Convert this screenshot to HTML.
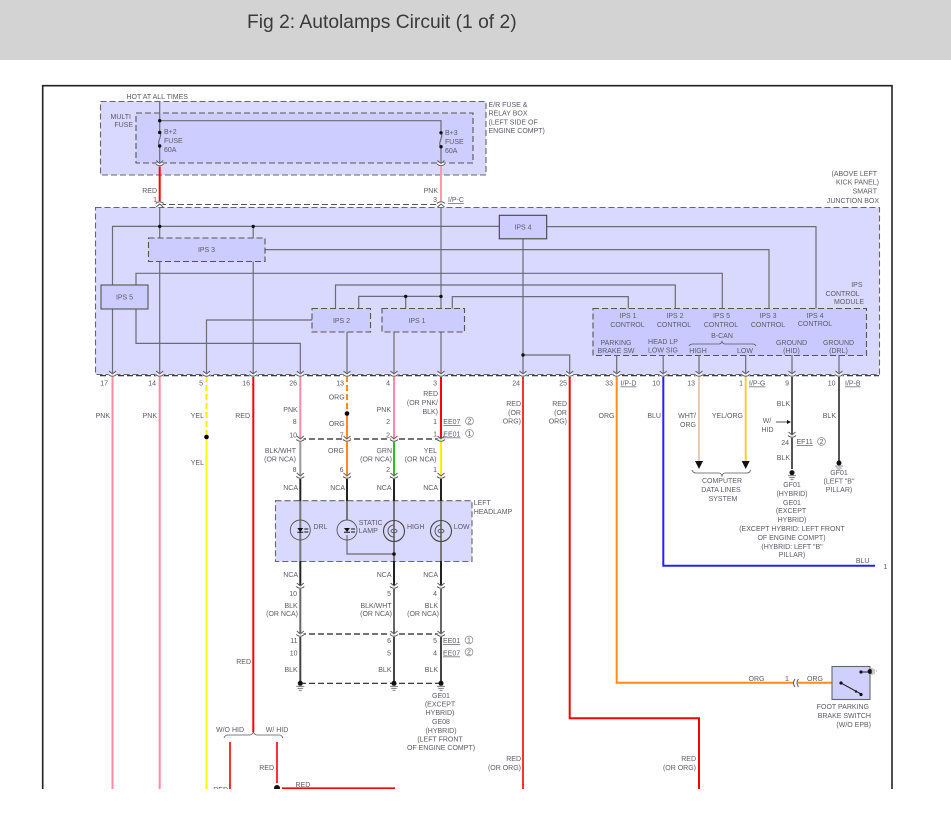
<!DOCTYPE html>
<html lang="en"><head><meta charset="utf-8"><title>Fig 2: Autolamps Circuit (1 of 2)</title>
<style>
html,body{margin:0;padding:0;background:#fff;width:951px;height:813px;overflow:hidden}
svg{display:block;position:absolute;left:0;top:0}
text{font-family:"Liberation Sans",sans-serif;font-size:7px;fill:#5a5a66}
.e{text-anchor:end}.m{text-anchor:middle}
.u{text-decoration:underline}
.w{fill:none;stroke:#6c6c74;stroke-width:1.2}
.c{fill:none;stroke-width:2}
.d{fill:none;stroke:#555;stroke-width:1.1;stroke-dasharray:6 3}
.k{fill:none;stroke:#222;stroke-width:1.2;stroke-dasharray:6 3}
</style></head><body>
<svg width="951" height="789" viewBox="0 0 951 789" xmlns="http://www.w3.org/2000/svg">
<defs>
<g id="cn"><ellipse cx="0" cy="1" rx="4.5" ry="2" fill="#fff"/><path d="M-3.5,-3 L0,0 L3.5,-3 M-4,0.5 Q0,4 4,0.5" fill="none" stroke="#555" stroke-width=".9"/></g>
<g id="cu"><ellipse cx="0" cy="-1" rx="4.5" ry="2" fill="#fff"/><path d="M-3.5,3 L0,0 L3.5,3 M-4,-.5 Q0,-4 4,-.5" fill="none" stroke="#555" stroke-width=".9"/></g>
<g id="gd"><circle r="2.5" fill="#111"/><path d="M-4,3 H4 M-2.8,5 H2.8 M-1.4,7 H1.4" stroke="#666" stroke-width=".8"/></g>
<g id="led"><circle r="10" fill="none" stroke="#555" stroke-width=".9"/><path d="M-3,-2 H3 L0,2 Z" fill="#111"/><path d="M-3,2.2 H3 M4,-1 H8 M4,2 H8" stroke="#111" stroke-width="1"/></g>
<g id="lmp"><circle r="10.5" fill="none" stroke="#444" stroke-width="1.1"/><path d="M0,-6 A6,6 0 0 0 0,6" fill="none" stroke="#555" stroke-width="1"/><ellipse rx="3" ry="1.8" fill="none" stroke="#555" stroke-width=".9"/></g>
</defs>

<rect width="951" height="60" fill="#d3d3d3"/>
<text x="247" y="28" style="font-size:19.25px;fill:#3a3a3a">Fig 2: Autolamps Circuit (1 of 2)</text>

<path d="M42.7,789 V85.7 H892 V789" fill="none" stroke="#222" stroke-width="1.6"/>

<!-- boxes -->
<rect x="100.5" y="101.5" width="385.5" height="73.5" fill="#d9d9ff" stroke="#666" stroke-width="1.1" stroke-dasharray="6 3"/>
<rect x="136" y="113" width="337" height="50" fill="#cdcdff" stroke="#555" stroke-width="1.1" stroke-dasharray="6 3"/>
<rect x="95.5" y="207.5" width="784" height="167" fill="#d9d9ff" stroke="#666" stroke-width="1.1" stroke-dasharray="6 3"/>
<rect x="593" y="308.5" width="273.5" height="47" fill="#c9c9ff" stroke="#555" stroke-width="1.1" stroke-dasharray="6 3"/>
<rect x="275.5" y="500.7" width="196.5" height="60.8" fill="#d9d9ff" stroke="#666" stroke-width="1.1" stroke-dasharray="6 3"/>

<!-- top wires -->
<path class="w" d="M159.7,101 V132 M159.7,146 V163 M159.7,120.7 H441 V133 M441,147 V163"/>
<path class="w" d="M159.7,132 C163,136 156,142 159.7,146 M441,133 C444,137 437,143 441,147"/>
<path class="c" stroke="#f00" d="M159.7,166 V204"/>
<path class="c" stroke="#ff99aa" d="M441,166 V204"/>
<path class="d" d="M160,204.5 H441"/>
<g fill="#111"><circle cx="159.7" cy="120.7" r="1.7"/><circle cx="159.7" cy="132.5" r="1.7"/><circle cx="159.7" cy="146" r="1.7"/><circle cx="441" cy="132.8" r="1.7"/><circle cx="441" cy="146.7" r="1.7"/></g>
<use href="#cn" x="159.7" y="163.5"/><use href="#cn" x="441" y="163.5"/>
<use href="#cu" x="159.7" y="204"/><use href="#cu" x="441" y="204"/>

<!-- junction box wires -->
<path class="w" d="M159.7,208 V374 M441,208 V308.5 M112.5,374 V226.4 H499 M253.2,226.4 V238 M253.2,261 V374"/>
<path class="w" d="M265,249.6 H769 V308.5 M136,285 V273.3 H722.3 V308.5 M136,309 V343.4 H300.3 V374"/>
<path class="w" d="M335.5,308.5 V285 H675.3 V308.5 M358.7,308.5 V296.4 H441 M405.7,296.4 V308.5 M452.3,308.5 V296.6 H628.3 V308.5"/>
<path class="w" d="M312,320 H206.5 V374 M347,332 V374 M394,332 V374 M441,332 V374"/>
<path class="w" d="M546.5,226.6 H816 V308.5 M523,239 V374 M523,355 H569.7 V374"/>
<path class="w" d="M616.7,355 V374 M663.2,355 V374 M699,355 V374 M745.7,355 V374 M792,355 V374 M839,355 V374"/>
<g fill="#111"><circle cx="159.7" cy="226.4" r="1.7"/><circle cx="253.2" cy="226.4" r="1.7"/><circle cx="405.7" cy="296.4" r="1.7"/><circle cx="441" cy="296.4" r="1.7"/><circle cx="523" cy="355" r="1.7"/></g>
<g stroke="#555" stroke-width="1.1">
<rect x="148.5" y="238" width="116.5" height="23.5" fill="#ccccff" stroke-dasharray="6 3"/>
<rect x="312" y="308.5" width="58.5" height="23.5" fill="#ccccff" stroke-dasharray="6 3"/>
<rect x="382" y="308.5" width="82.5" height="23.5" fill="#ccccff" stroke-dasharray="6 3"/>
<rect x="101" y="285" width="47" height="24" fill="#ccccff"/>
<rect x="499.3" y="215.3" width="47.4" height="23.5" fill="#ccccff" stroke="#444"/>
</g>
<path d="M689,346 Q690,344 693,344 H719 Q721,344 722,341.5 Q723,344 725,344 H753 Q755,344 756,346" fill="none" stroke="#555" stroke-width=".8"/>
<path class="k" d="M100,375.7 H879"/>

<!-- harness wires -->
<path class="c" stroke="#ff8aa5" d="M112.5,376 V789 M159.7,376 V789"/>
<path class="c" stroke="#ffee00" stroke-dasharray="6 3" d="M206.5,376 V437"/>
<path class="c" stroke="#ffff00" d="M206.5,437 V789"/>
<path class="c" stroke="#f00" d="M253.3,376 V732"/>
<path class="c" stroke="#ff8aa5" d="M300.3,376 V439 M394,376 V439"/>
<path class="c" stroke="#ff8c1a" stroke-dasharray="6 3" d="M347,376 V413"/>
<path class="c" stroke="#ff8c1a" d="M347,413 V476"/>
<path class="c" stroke="#f00" d="M441,376 V439"/>
<path class="c" stroke="#999" d="M300.3,439 V476"/>
<path class="c" stroke="#33bb22" d="M394,439 V476"/>
<path class="c" stroke="#ffee00" d="M441,439 V476"/>
<path class="c" stroke="#222" d="M300.3,476 V501 M347,476 V501 M394,476 V501 M441,476 V501 M300.3,561 V586 M394,561 V586 M441,561 V586"/>
<path class="c" stroke="#777" d="M300.3,501 V561 M347,501 V520 M394,501 V561 M441,501 V561"/>
<path class="w" d="M347,535 V554 H394"/>
<circle cx="394" cy="554" r="1.8" fill="#111"/>
<path class="c" stroke="#666" d="M300.3,586 V634 M394,586 V634 M441,586 V634"/>
<path class="c" stroke="#444" d="M300.3,634 V683 M394,634 V683 M441,634 V683"/>
<path class="k" d="M300,439 H441 M300,634 H441 M300,683.3 H441"/>
<path class="c" stroke="#f33" d="M523,376 V789"/>
<path class="c" stroke="#f00" d="M569.7,376 V718.3 H699 V789"/>
<path class="c" stroke="#ff8c1a" d="M616.7,376 V682.7 H793 M798,682.7 H832"/>
<path class="c" stroke="#2222ff" d="M663.3,376 V565.7 H875"/>
<path class="c" stroke="#e5cdb5" d="M699,376 V462"/>
<path class="c" stroke="#ffcc33" d="M745.7,376 V462"/>
<path class="c" stroke="#555" d="M792,376 V469 M839,376 V461"/>
<path class="c" stroke="#f33" d="M230,742 V789 M277,742 V783"/>
<path class="c" stroke="#f00" d="M282,788.4 H395"/>
<circle cx="277" cy="788" r="3" fill="#111"/>
<circle cx="206.5" cy="437" r="2.3" fill="#000"/>
<circle cx="347" cy="413.5" r="2.3" fill="#000"/>
<path d="M224,738 Q225,735 228,735 H250 Q252,735 253.3,732 Q254.6,735 257,735 H279 Q282,735 282.7,738" fill="none" stroke="#555" stroke-width=".8"/>

<!-- pin connectors -->
<g>
<use href="#cn" x="112.5" y="374"/><use href="#cn" x="159.7" y="374"/><use href="#cn" x="206.5" y="374"/><use href="#cn" x="253.2" y="374"/><use href="#cn" x="300.3" y="374"/><use href="#cn" x="347" y="374"/><use href="#cn" x="394" y="374"/><use href="#cn" x="441" y="374"/><use href="#cn" x="523" y="374"/><use href="#cn" x="569.7" y="374"/><use href="#cn" x="616.7" y="374"/><use href="#cn" x="663.2" y="374"/><use href="#cn" x="699" y="374"/><use href="#cn" x="745.7" y="374"/><use href="#cn" x="792" y="374"/><use href="#cn" x="839" y="374"/>
<use href="#cn" x="300.3" y="439"/><use href="#cn" x="347" y="439"/><use href="#cn" x="394" y="439"/><use href="#cn" x="441" y="439"/>
<use href="#cn" x="300.3" y="476"/><use href="#cn" x="347" y="476"/><use href="#cn" x="394" y="476"/><use href="#cn" x="441" y="476"/>
<use href="#cn" x="300.3" y="586"/><use href="#cn" x="394" y="586"/><use href="#cn" x="441" y="586"/>
<use href="#cn" x="300.3" y="634"/><use href="#cn" x="394" y="634"/><use href="#cn" x="441" y="634"/>
<use href="#cn" x="792" y="435"/>
<use href="#gd" x="300.3" y="683.3"/><use href="#gd" x="394" y="683.3"/><use href="#gd" x="441" y="683.3"/>
<use href="#gd" x="792" y="472.7"/><use href="#gd" x="839" y="463"/>
<use href="#led" x="300.3" y="530"/><use href="#led" x="347" y="530"/>
<use href="#lmp" x="394" y="531"/><use href="#lmp" x="441" y="531"/>
</g>

<!-- arrows, brace, switch -->
<path d="M695,461 H703 L699,469 Z M741.7,461 H749.7 L745.7,469 Z" fill="#111"/>
<path d="M692,470 Q693,473 696,473 H719 Q721,473 722,476 Q723,473 725,473 H747 Q750,473 750.5,470" fill="none" stroke="#555" stroke-width=".8"/>
<path d="M776,422 H788" stroke="#555" stroke-width="1"/><path d="M787,420 L791,422 L787,424 Z" fill="#111"/>
<path d="M795,679 Q792,683 795,687 M798.5,679 Q795.5,683 798.5,687" fill="none" stroke="#444" stroke-width=".9"/>
<rect x="832" y="666.5" width="38" height="33" fill="#d0d0ff" stroke="#666" stroke-width="1.1"/>
<path d="M841,683 L861,694 M861,672 H870" stroke="#222" stroke-width="1"/>
<g fill="#111"><circle cx="841" cy="683" r="1.6"/><circle cx="856" cy="691.5" r="1.2"/><circle cx="861" cy="694.5" r="1.6"/><circle cx="861" cy="672" r="1.6"/><circle cx="870" cy="671.5" r="2.4"/></g>
<path d="M872,668 V675 M874,669 V674 M876,671 H877" stroke="#888" stroke-width=".9"/>

<!-- circled -->
<g fill="#fff" stroke="#777" stroke-width=".6"><circle cx="469.5" cy="421" r="3.9"/><circle cx="469.5" cy="433.5" r="3.9"/><circle cx="469" cy="640" r="3.9"/><circle cx="469" cy="652" r="3.9"/><circle cx="821.5" cy="441.5" r="3.9"/></g>
<g class="m" text-anchor="middle" style="font-size:6.5px">
<text x="469.5" y="423.5" class="m">2</text><text x="469.5" y="436" class="m">1</text><text x="469" y="642.5" class="m">1</text><text x="469" y="654.5" class="m">2</text><text x="821.5" y="444" class="m">2</text>
</g>

<!-- labels: top -->
<text x="126.5" y="99">HOT AT ALL TIMES</text>
<text x="488.5" y="107">E/R FUSE &amp;</text><text x="488.5" y="115.5">RELAY BOX</text><text x="488.5" y="124.5">(LEFT SIDE OF</text><text x="488.5" y="133">ENGINE COMPT)</text>
<text class="e" x="131" y="119">MULTI</text><text class="e" x="133" y="127">FUSE</text>
<text x="164" y="134">B+2</text><text x="164" y="143">FUSE</text><text x="164" y="152">60A</text>
<text x="445" y="135">B+3</text><text x="445" y="144">FUSE</text><text x="445" y="153">60A</text>
<text class="e" x="157" y="193">RED</text><text class="e" x="438" y="193">PNK</text>
<text class="e" x="157" y="202">1</text><text class="e" x="437" y="202">3</text><text class="u" x="448" y="202">I/P-C</text>
<text class="e" x="877" y="176">(ABOVE LEFT</text><text class="e" x="879" y="184.5">KICK PANEL)</text><text class="e" x="877" y="193.5">SMART</text><text class="e" x="879" y="203">JUNCTION BOX</text>
<text class="m" x="206.5" y="252">IPS 3</text><text class="m" x="124.5" y="299.5">IPS 5</text><text class="m" x="341.5" y="323">IPS 2</text><text class="m" x="417" y="323">IPS 1</text><text class="m" x="523" y="229.5">IPS 4</text>
<text class="e" x="862.5" y="287">IPS</text><text class="e" x="859.7" y="296">CONTROL</text><text class="e" x="864" y="304">MODULE</text>
<text class="m" x="628" y="318">IPS 1</text><text class="m" x="627.5" y="327">CONTROL</text>
<text class="m" x="675" y="318">IPS 2</text><text class="m" x="674" y="327">CONTROL</text>
<text class="m" x="721.5" y="318">IPS 5</text><text class="m" x="721" y="327">CONTROL</text>
<text class="m" x="768" y="318">IPS 3</text><text class="m" x="768" y="327">CONTROL</text>
<text class="m" x="815" y="318">IPS 4</text><text class="m" x="815" y="326">CONTROL</text>
<text class="m" x="722" y="338">B-CAN</text>
<text class="m" x="616" y="345">PARKING</text><text class="m" x="616" y="353">BRAKE SW</text>
<text class="m" x="663" y="344">HEAD LP</text><text class="m" x="663" y="352.5">LOW SIG</text>
<text class="m" x="698" y="353">HIGH</text><text class="m" x="745" y="353">LOW</text>
<text class="m" x="791.5" y="345">GROUND</text><text class="m" x="791.5" y="353">(HID)</text>
<text class="m" x="838.5" y="345">GROUND</text><text class="m" x="838.5" y="353">(DRL)</text>

<!-- pin numbers -->
<text class="e" x="108" y="385.5">17</text><text class="e" x="156" y="385.5">14</text><text class="e" x="203" y="385.5">5</text><text class="e" x="250" y="385.5">16</text><text class="e" x="297" y="385.5">26</text><text class="e" x="344" y="385.5">13</text><text class="e" x="390" y="385.5">4</text><text class="e" x="437" y="385.5">3</text><text class="e" x="520" y="385.5">24</text><text class="e" x="567" y="385.5">25</text><text class="e" x="613" y="385.5">33</text><text class="u" x="620.5" y="385.5">I/P-D</text><text class="e" x="660" y="385.5">10</text><text class="e" x="695" y="385.5">13</text><text class="e" x="743" y="385.5">1</text><text class="u" x="749" y="385.5">I/P-G</text><text class="e" x="789" y="385.5">9</text><text class="e" x="835.5" y="385.5">10</text><text class="u" x="845" y="385.5">I/P-B</text>

<!-- wire labels -->
<text class="e" x="110" y="418">PNK</text><text class="e" x="157" y="418">PNK</text><text class="e" x="204" y="418">YEL</text><text class="e" x="204" y="465">YEL</text><text class="e" x="250" y="418">RED</text><text class="e" x="251" y="664">RED</text>
<text class="e" x="297.7" y="412">PNK</text><text class="e" x="296.7" y="424">8</text><text class="e" x="297" y="437.5">10</text>
<text class="e" x="344.7" y="399.5">ORG</text><text class="e" x="344.7" y="426">ORG</text><text class="e" x="343.7" y="437.5">7</text>
<text class="e" x="391" y="412">PNK</text><text class="e" x="390" y="424">2</text><text class="e" x="390" y="437.5">2</text>
<text class="e" x="438" y="396">RED</text><text class="e" x="438" y="405">(OR PNK/</text><text class="e" x="438" y="414">BLK)</text>
<text class="e" x="437" y="424">1</text><text class="u" x="443.3" y="424">EE07</text><text class="e" x="437" y="436.5">1</text><text class="u" x="443.3" y="436.5">EE01</text>
<text class="e" x="296" y="453">BLK/WHT</text><text class="e" x="296" y="461.5">(OR NCA)</text><text class="e" x="296.5" y="472">8</text>
<text class="e" x="344" y="453">ORG</text><text class="e" x="343.5" y="472">6</text>
<text class="e" x="392" y="453">GRN</text><text class="e" x="392" y="461.5">(OR NCA)</text><text class="e" x="390" y="472">2</text>
<text class="e" x="437" y="453">YEL</text><text class="e" x="436.5" y="461.5">(OR NCA)</text><text class="e" x="437" y="472">1</text>
<text class="e" x="298" y="490">NCA</text><text class="e" x="345" y="490">NCA</text><text class="e" x="391.5" y="490">NCA</text><text class="e" x="438" y="490">NCA</text>
<text x="473.7" y="505">LEFT</text><text x="473.7" y="514">HEADLAMP</text>
<text x="313.5" y="529">DRL</text><text x="358.7" y="525">STATIC</text><text x="358.7" y="533">LAMP</text><text x="407" y="529">HIGH</text><text x="453.7" y="529">LOW</text>
<text class="e" x="298" y="577">NCA</text><text class="e" x="391.5" y="577">NCA</text><text class="e" x="438" y="577">NCA</text>
<text class="e" x="297" y="596">10</text><text class="e" x="391" y="596">5</text><text class="e" x="437" y="596">4</text>
<text class="e" x="297.7" y="608">BLK</text><text class="e" x="298" y="616">(OR NCA)</text>
<text class="e" x="391.6" y="608">BLK/WHT</text><text class="e" x="392" y="616">(OR NCA)</text>
<text class="e" x="438" y="608">BLK</text><text class="e" x="439" y="616">(OR NCA)</text>
<text class="e" x="297.5" y="643">11</text><text class="e" x="297.5" y="655.5">10</text><text class="e" x="297.7" y="672">BLK</text>
<text class="e" x="391" y="643">6</text><text class="e" x="391" y="655.5">5</text><text class="e" x="391.5" y="672">BLK</text>
<text class="e" x="437" y="643">5</text><text class="u" x="443" y="643">EE01</text><text class="e" x="437" y="655.5">4</text><text class="u" x="443" y="655.5">EE07</text><text class="e" x="438" y="672">BLK</text>
<text class="m" x="441" y="698">GE01</text><text class="m" x="440" y="706.5">(EXCEPT</text><text class="m" x="440" y="715">HYBRID)</text><text class="m" x="441" y="724">GE08</text><text class="m" x="441" y="733">(HYBRID)</text><text class="m" x="440" y="741.5">(LEFT FRONT</text><text class="m" x="441" y="750">OF ENGINE COMPT)</text>
<text class="m" x="230" y="732">W/O HID</text><text class="m" x="277" y="732">W/ HID</text>
<text class="e" x="274" y="770">RED</text><text x="295.5" y="787">RED</text><text class="e" x="228" y="792">RED</text>

<text class="e" x="521" y="406">RED</text><text class="e" x="521" y="415">(OR</text><text class="e" x="521" y="423.5">ORG)</text>
<text class="e" x="567" y="406">RED</text><text class="e" x="567" y="415">(OR</text><text class="e" x="567" y="423.5">ORG)</text>
<text class="e" x="521" y="761">RED</text><text class="e" x="521" y="770">(OR ORG)</text>
<text class="e" x="696" y="761">RED</text><text class="e" x="696" y="770">(OR ORG)</text>
<text class="e" x="614.5" y="418">ORG</text><text class="e" x="661" y="418">BLU</text>
<text class="e" x="696" y="418">WHT/</text><text class="e" x="696" y="427">ORG</text><text class="e" x="743" y="418">YEL/ORG</text>
<text class="e" x="790" y="406">BLK</text><text class="e" x="836" y="418">BLK</text>
<text class="m" x="767" y="423">W/</text><text class="m" x="767.5" y="432">HID</text>
<text class="e" x="789" y="445">24</text><text class="u" x="796.5" y="444">EF11</text><text class="e" x="790" y="460">BLK</text>
<text class="m" x="722" y="483">COMPUTER</text><text class="m" x="721" y="492">DATA LINES</text><text class="m" x="723" y="501">SYSTEM</text>
<text class="m" x="792" y="487">GF01</text><text class="m" x="792" y="496">(HYBRID)</text><text class="m" x="792" y="505">GE01</text><text class="m" x="791" y="513">(EXCEPT</text><text class="m" x="792" y="522">HYBRID)</text><text class="m" x="792" y="531">(EXCEPT HYBRID: LEFT FRONT</text><text class="m" x="791.5" y="540">OF ENGINE COMPT)</text><text class="m" x="792" y="549">(HYBRID: LEFT "B"</text><text class="m" x="792" y="557">PILLAR)</text>
<text class="m" x="839" y="475">GF01</text><text class="m" x="839" y="483.5">(LEFT "B"</text><text class="m" x="839" y="492">PILLAR)</text>
<text class="e" x="869.5" y="563">BLU</text><text x="883.5" y="569">1</text>
<text class="m" x="756.5" y="681">ORG</text><text x="785" y="681">1</text><text class="m" x="815" y="681">ORG</text>
<text class="e" x="869" y="709">FOOT PARKING</text><text class="e" x="871" y="718">BRAKE SWITCH</text><text class="e" x="871" y="727">(W/O EPB)</text>
</svg>
</body></html>
